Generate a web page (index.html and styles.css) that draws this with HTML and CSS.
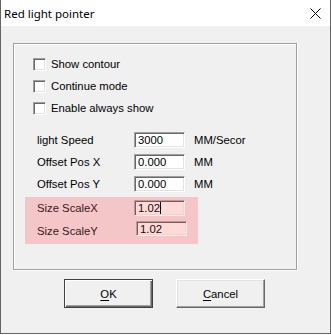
FILE: index.html
```html
<!DOCTYPE html>
<html lang="en">
<head>
  <meta charset="UTF-8">
  <title>Red light pointer</title>
  <link rel="stylesheet" href="styles.css">
</head>
<body>

  <div class="window">
    <header class="titlebar">
      <span class="title">Red light pointer</span>
      <svg class="close" width="11" height="11" viewBox="0 0 11 11">
        <path d="M0.5 0.5 L10.5 10.5 M10.5 0.5 L0.5 10.5" stroke="#000" stroke-width="1" fill="none"/>
      </svg>
    </header>

    <main class="client">
      <div class="group">
        <!-- Options -->
        <div class="checks">
          <label class="check"><span class="box"></span>Show contour</label>
          <label class="check"><span class="box"></span>Continue mode</label>
          <label class="check"><span class="box"></span>Enable always show</label>
        </div>

        <!-- Values -->
        <div class="fields">
          <div class="row">
            <span class="label">light Speed</span>
            <span class="edit">3000</span>
            <span class="unit">MM/Secor</span>
          </div>
          <div class="row">
            <span class="label">Offset Pos X</span>
            <span class="edit">0.000</span>
            <span class="unit">MM</span>
          </div>
          <div class="row">
            <span class="label">Offset Pos Y</span>
            <span class="edit">0.000</span>
            <span class="unit">MM</span>
          </div>
        </div>

        <!-- Scale, highlighted -->
        <div class="scale">
          <div class="row first">
            <span class="label">Size ScaleX</span>
            <span class="edit">1.02<span class="caret"></span></span>
          </div>
          <div class="row second">
            <span class="label">Size ScaleY</span>
            <span class="edit">1.02</span>
          </div>
        </div>
      </div>

      <div class="buttons">
        <button class="btn default"><u>O</u>K</button>
        <button class="btn"><u>C</u>ancel</button>
      </div>
    </main>
  </div>

</body>
</html>
```

FILE: styles.css
```css
:root {
  --face: #f0f0f0;
  --frame: #646464;
  --shadow: #a0a0a0;
  --dark: #696969;
  --pink: #f4c6c8;
  --pink-edit: #ffd8d8;
  --ui-font: "Liberation Sans", Arial, sans-serif;
}
*, *::before, *::after {
  box-sizing: border-box;
  margin: 0;
  padding: 0;
}
body {
  background: #fff;
  font-family: var(--ui-font);
  font-size: 11.3px;
  color: #000;
}
.window {
  width: 331px;
  height: 334px;
  background: var(--face);
  border: 1px solid var(--frame);
  border-top: none;
  display: flex;
  flex-direction: column;
}
.titlebar {
  height: 26px;
  background: #fff;
  display: flex;
  align-items: center;
  justify-content: space-between;
  padding: 0 9px 0 3px;
}
.title {
  font-family: "Noto Sans", "Open Sans", sans-serif;
  font-size: 11.5px;
  color: #000;
}
.close {
  display: block;
  margin-top: 1px;
}
.client {
  flex: 1;
  padding: 17px 0 0 12px;
}
.group {
  width: 284px;
  height: 227px;
  border: 1px solid var(--shadow);
  box-shadow: inset 1px 1px 0 #fff, 1px 1px 0 #fff;
}
.checks {
  padding: 9px 0 0 19px;
}
.check {
  display: flex;
  align-items: center;
  height: 22px;
  gap: 5px;
}
.box {
  width: 13px;
  height: 13px;
  background: #fff;
  border: 1px solid;
  border-color: var(--shadow) #fff #fff var(--shadow);
  box-shadow: inset 1px 1px 0 var(--dark), inset -1px -1px 0 #e3e3e3;
}
.fields {
  margin-top: 10px;
  padding-left: 23px;
}
.row {
  display: flex;
  align-items: center;
  height: 22px;
}
.label {
  width: 97px;
}
.edit {
  width: 51px;
  height: 16px;
  background: #fff;
  border: 1px solid;
  border-color: var(--shadow) #fff #fff var(--shadow);
  box-shadow: inset 1px 1px 0 var(--dark), inset -1px -1px 0 #e3e3e3;
  padding: 1px 0 0 3px;
  line-height: 13px;
}
.unit {
  margin-left: 9px;
  white-space: nowrap;
}
.scale {
  margin: 2px 0 0 11px;
  width: 173px;
  height: 47px;
  background: var(--pink);
  padding: 3px 0 0 12px;
  color: #3a1818;
}
.scale .row {
  align-items: flex-start;
}
.scale .label {
  line-height: 14px;
  padding-top: 1px;
}
.scale .edit {
  background: var(--pink-edit);
  border-color: #b89c9c #ffe8e8 #ffe8e8 #b89c9c;
  box-shadow: inset 1px 1px 0 #7a5a5a, inset -1px -1px 0 #f0d4d4;
  color: #1a0a0a;
}
.scale .first {
  height: 21px;
}
.scale .second .label {
  padding-top: 3px;
}
.scale .second .edit {
  margin-left: 2px;
  height: 15px;
}
.caret {
  display: inline-block;
  width: 1px;
  height: 12px;
  background: #000;
  vertical-align: -2px;
}
.buttons {
  display: flex;
  gap: 23px;
  padding: 9px 0 0 51px;
}
.btn {
  width: 89px;
  height: 29px;
  font-family: var(--ui-font);
  font-size: 11.3px;
  color: #000;
  background: var(--face);
  border: 1px solid;
  border-color: #fff var(--dark) var(--dark) #fff;
  box-shadow: inset -1px -1px 0 var(--shadow), inset 1px 1px 0 #e3e3e3;
}
.btn.default {
  border-color: #404040;
  box-shadow: inset 1px 1px 0 #fff, inset -1px -1px 0 var(--dark), inset -2px -2px 0 var(--shadow);
}
.btn u {
  text-decoration: underline;
  text-underline-offset: 2px;
}
```
